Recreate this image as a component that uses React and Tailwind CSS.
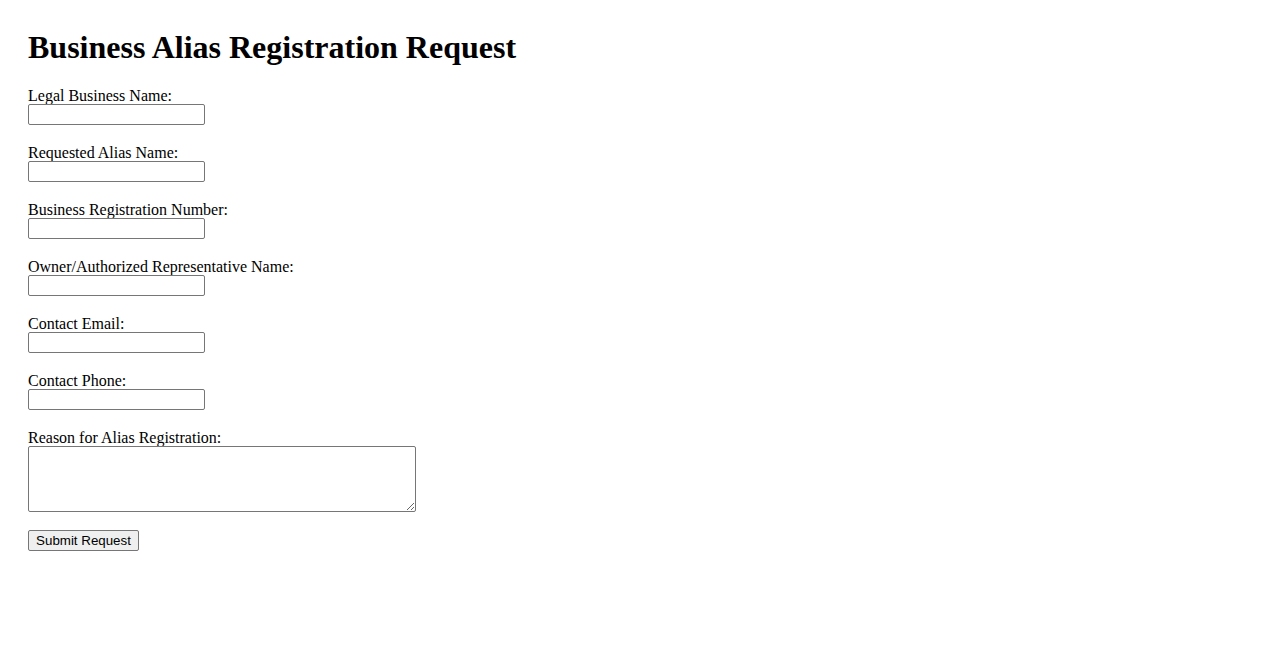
export default function App() {
  const fields = [
    "Legal Business Name:",
    "Requested Alias Name:",
    "Business Registration Number:",
    "Owner/Authorized Representative Name:",
    "Contact Email:",
    "Contact Phone:",
  ];
  return (
    <div className="min-h-[650px] bg-white pl-[28px] pt-[28px] text-black font-['Liberation_Serif',serif] text-[16px]">
      <h1 className="text-[32px] font-bold leading-[39px] mb-[19px]">Business Alias Registration Request</h1>
      <form className="flex flex-col items-start" onSubmit={(e) => e.preventDefault()}>
        {fields.map((f) => (
          <div key={f} className="flex flex-col items-start mb-[18px]">
            <label className="leading-[20px] h-[18px]">{f}</label>
            <input
              type="text"
              className="w-[177px] h-[21px] border border-[#767676] rounded-[2px] px-[2px] bg-white font-['Liberation_Sans',sans-serif] text-[13.33px]"
            />
          </div>
        ))}
        <div className="flex flex-col items-start mb-[18px]">
          <label className="leading-[20px] h-[18px]">Reason for Alias Registration:</label>
          <textarea className="w-[388px] h-[66px] border border-[#767676] rounded-[2px] bg-white font-['Liberation_Mono',monospace] text-[13.33px]" />
        </div>
        <button
          type="submit"
          className="h-[21px] w-[111px] bg-[#efefef] border border-[#767676] rounded-[2px] font-['Liberation_Sans',sans-serif] text-[13.33px] leading-[15px] px-[6px] text-black"
        >
          Submit Request
        </button>
      </form>
    </div>
  );
}
